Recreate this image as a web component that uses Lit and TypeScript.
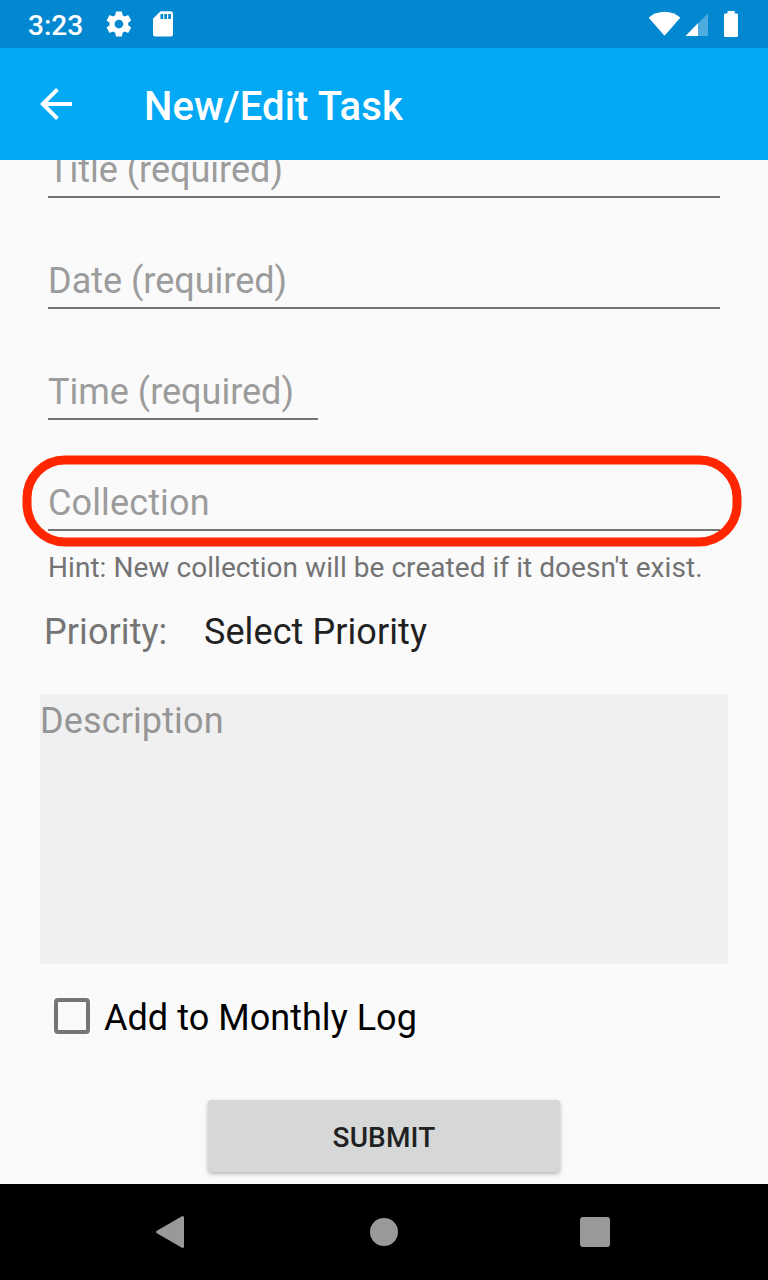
import { LitElement, html, css } from "lit";
import { customElement, property } from "lit/decorators.js";

@customElement("text-entry")
class TextEntry extends LitElement {
  @property() placeholder = "";
  static styles = css`
    :host { display: block; box-sizing: border-box; height: 49px; border-bottom: 2px solid #757575; }
    .placeholder { font-size: 36px; line-height: 42px; color: #9c9c9c; white-space: nowrap; letter-spacing: var(--tracking, 0); }
  `;
  render() {
    return html`<div class="placeholder">${this.placeholder}</div>`;
  }
}

@customElement("app-root")
class AppRoot extends LitElement {
  static styles = css`
    :host { display: flex; flex-direction: column; width: 768px; height: 1280px; overflow: hidden;
      background: #fafafa; font-family: Roboto, sans-serif; font-size: 36px; line-height: 42px; color: #000; }
    * { box-sizing: border-box; }
    svg { display: block; }
    .status { flex: none; height: 48px; background: #0288d1; display: flex; justify-content: space-between; }
    .left { display: flex; padding-left: 28px; }
    .clock { width: 74px; padding-top: 9px; font-size: 28px; line-height: 33px; font-weight: 500; color: #fff; }
    .toolbar { flex: none; height: 112px; background: #03a9f4; display: flex; }
    .title { padding: 35px 0 0 32px; font-size: 40px; line-height: 47px; font-weight: 500; color: #fff; white-space: nowrap; letter-spacing: 0.14px; }
    .form { flex: 1; min-height: 0; overflow: hidden; display: flex; flex-direction: column; }
    .fields { margin: -11px 48px 0; display: flex; flex-direction: column; gap: 62px; }
    .short { width: 270px; }
    .highlighted { position: relative; --tracking: 0.13px; }
    .ring { position: absolute; left: -26px; top: -27px; }
    .hint { margin: 20px 48px 0; font-size: 28px; line-height: 33px; color: #737373; white-space: nowrap; letter-spacing: 0.05px; }
    .priority { margin: 27px 44px 0; display: flex; letter-spacing: 0.08px; }
    .priority-label { width: 160px; color: #757575; }
    .priority-value { color: #212121; }
    .description { margin: 41px 40px 0; height: 270px; padding-top: 6px; background: #f0f0f0; color: #969696; letter-spacing: 0.13px; }
    .check { margin: 33px 54px 0; display: flex; gap: 14px; letter-spacing: 0.04px; }
    .box { width: 36px; height: 36px; margin-top: 1px; border: 4px solid #757575; border-radius: 4px; }
    .submit { align-self: center; margin-top: 61px; width: 352px; height: 72px; border: 0; border-radius: 4px; padding: 3px 0 0; background: #d6d7d7;
      box-shadow: 0 2px 4px rgba(0,0,0,.27); font: 500 28px/33px Roboto, sans-serif; color: #212121; letter-spacing: 0.15px; }
    .nav { flex: none; height: 96px; background: #000; }
  `;

  render() {
    return html`
      <div class="status">
        <div class="left">
          <div class="clock">3:23</div>
          <svg width="80" height="48" viewBox="102 0 80 48" fill="#fff">
            <g transform="translate(103.9 9) scale(1.25)">
              <path d="M19.43 12.98c.04-.32.07-.64.07-.98s-.03-.66-.07-.98l2.11-1.65c.19-.15.24-.42.12-.64l-2-3.46c-.12-.22-.39-.3-.61-.22l-2.49 1c-.52-.4-1.08-.73-1.69-.98l-.38-2.65C14.46 2.18 14.25 2 14 2h-4c-.25 0-.46.18-.49.42l-.38 2.65c-.61.25-1.17.59-1.69.98l-2.49-1c-.23-.09-.49 0-.61.22l-2 3.46c-.13.22-.07.49.12.64l2.11 1.65c-.04.32-.07.65-.07.98s.03.66.07.98l-2.11 1.65c-.19.15-.24.42-.12.64l2 3.46c.12.22.39.3.61.22l2.49-1c.52.4 1.08.73 1.69.98l.38 2.65c.03.24.24.42.49.42h4c.25 0 .46-.18.49-.42l.38-2.65c.61-.25 1.17-.59 1.69-.98l2.49 1c.23.09.49 0 .61-.22l2-3.46c.12-.22.07-.49-.12-.64l-2.11-1.65zM12 15.5c-1.93 0-3.5-1.57-3.5-3.5s1.57-3.5 3.5-3.5 3.5 1.57 3.5 3.5-1.57 3.5-3.5 3.5z"/>
            </g>
            <path fill-rule="evenodd" d="M160.5 11.3H170.5Q173 11.3 173 13.8V34Q173 36.5 170.5 36.5H155.5Q153 36.5 153 34V18.8ZM160.5 14V19H163.2V14ZM164.3 14V19H167V14ZM168.2 14V19H170.9V14Z"/>
          </svg>
        </div>
        <svg width="128" height="48" viewBox="640 0 128 48" fill="#fff">
          <path d="M649.2 17.2C653 13.8 658.4 11.7 664.5 11.7S676 13.8 679.8 17.2Q680.2 17.7 679.8 18.2L665.2 35.1Q664.5 35.9 663.8 35.1L649.2 18.2Q648.8 17.7 649.2 17.2Z"/>
          <path opacity=".3" d="M708 14.2Q708 13.5 707.3 14L686 35.4Q685.7 36 686.5 36H707.2Q708 36 708 35.2Z"/>
          <path d="M698 23.3V36H686.5Q685.7 36 686 35.4Z"/>
          <path d="M727.5 11H734.7V13.5H736.7Q738 13.5 738 14.8V35.7Q738 37 736.7 37H725.3Q724 37 724 35.7V14.8Q724 13.5 725.3 13.5H727.5Z"/>
        </svg>
      </div>
      <div class="toolbar">
        <svg width="112" height="112" viewBox="0 48 112 112" fill="#fff">
          <path d="M72 102H47.66L58.84 90.82L56 88L40 104L56 120L58.82 117.18L47.66 106H72Z"/>
        </svg>
        <div class="title">New/Edit Task</div>
      </div>
      <div class="form">
        <div class="fields">
          <text-entry placeholder="Title (required)"></text-entry>
          <text-entry placeholder="Date (required)"></text-entry>
          <text-entry class="short" placeholder="Time (required)"></text-entry>
          <div class="highlighted">
            <text-entry placeholder="Collection"></text-entry>
            <svg class="ring" width="720" height="92" viewBox="0 0 720 92" fill="none" stroke="#ff2600" stroke-width="9">
              <rect x="5" y="5" width="710" height="82" rx="38"/>
            </svg>
          </div>
        </div>
        <div class="hint">Hint: New collection will be created if it doesn't exist.</div>
        <div class="priority">
          <div class="priority-label">Priority:</div>
          <div class="priority-value">Select Priority</div>
        </div>
        <div class="description">Description</div>
        <div class="check"><div class="box"></div><div>Add to Monthly Log</div></div>
        <button class="submit">SUBMIT</button>
      </div>
      <div class="nav">
        <svg width="768" height="96" viewBox="0 1184 768 96" fill="#999">
          <path d="M156.8 1230.7L181.5 1216.4Q184 1215.2 184 1217.8V1246.2Q184 1248.8 181.5 1247.6L156.8 1233.3Q155.2 1232 156.8 1230.7Z"/>
          <circle cx="384" cy="1232" r="14"/>
          <rect x="580" y="1217" width="30" height="30" rx="3"/>
        </svg>
      </div>
    `;
  }
}
